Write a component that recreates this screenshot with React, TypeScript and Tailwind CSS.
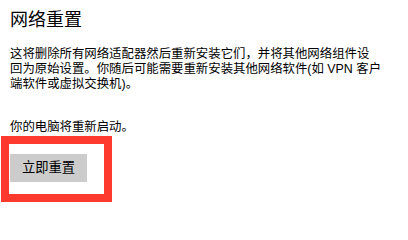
export default function App() {
  return (
    <div className="w-[408px] h-[219px] bg-white pl-[10px] pt-[8px] text-black font-['Liberation_Sans','Noto_Sans_CJK_SC',sans-serif] overflow-hidden">
      {/* Section title */}
      <h2 className="text-[18px] leading-[24px] font-normal">网络重置</h2>

      {/* Description */}
      <p className="mt-[15px] text-[12.4px] leading-[15px] whitespace-nowrap">
        这将删除所有网络适配器然后重新安装它们，并将其他网络组件设
        <br />
        回为原始设置。你随后可能需要重新安装其他网络软件(如 VPN 客户
        <br />
        端软件或虚拟交换机)。
      </p>

      <p className="mt-[28px] text-[12.4px] leading-[15px]">你的电脑将重新启动。</p>

      {/* Reset button with red highlight */}
      <div className="relative mt-[19px] w-fit">
        <button className="w-[77px] h-[28px] bg-[#cccccc] text-[13.3px] leading-none text-black">
          立即重置
        </button>
        <div className="absolute left-[-9px] top-[-18px] w-[111px] h-[66px] border-[8px] border-[#fe3a2e] pointer-events-none" />
      </div>
    </div>
  );
}
